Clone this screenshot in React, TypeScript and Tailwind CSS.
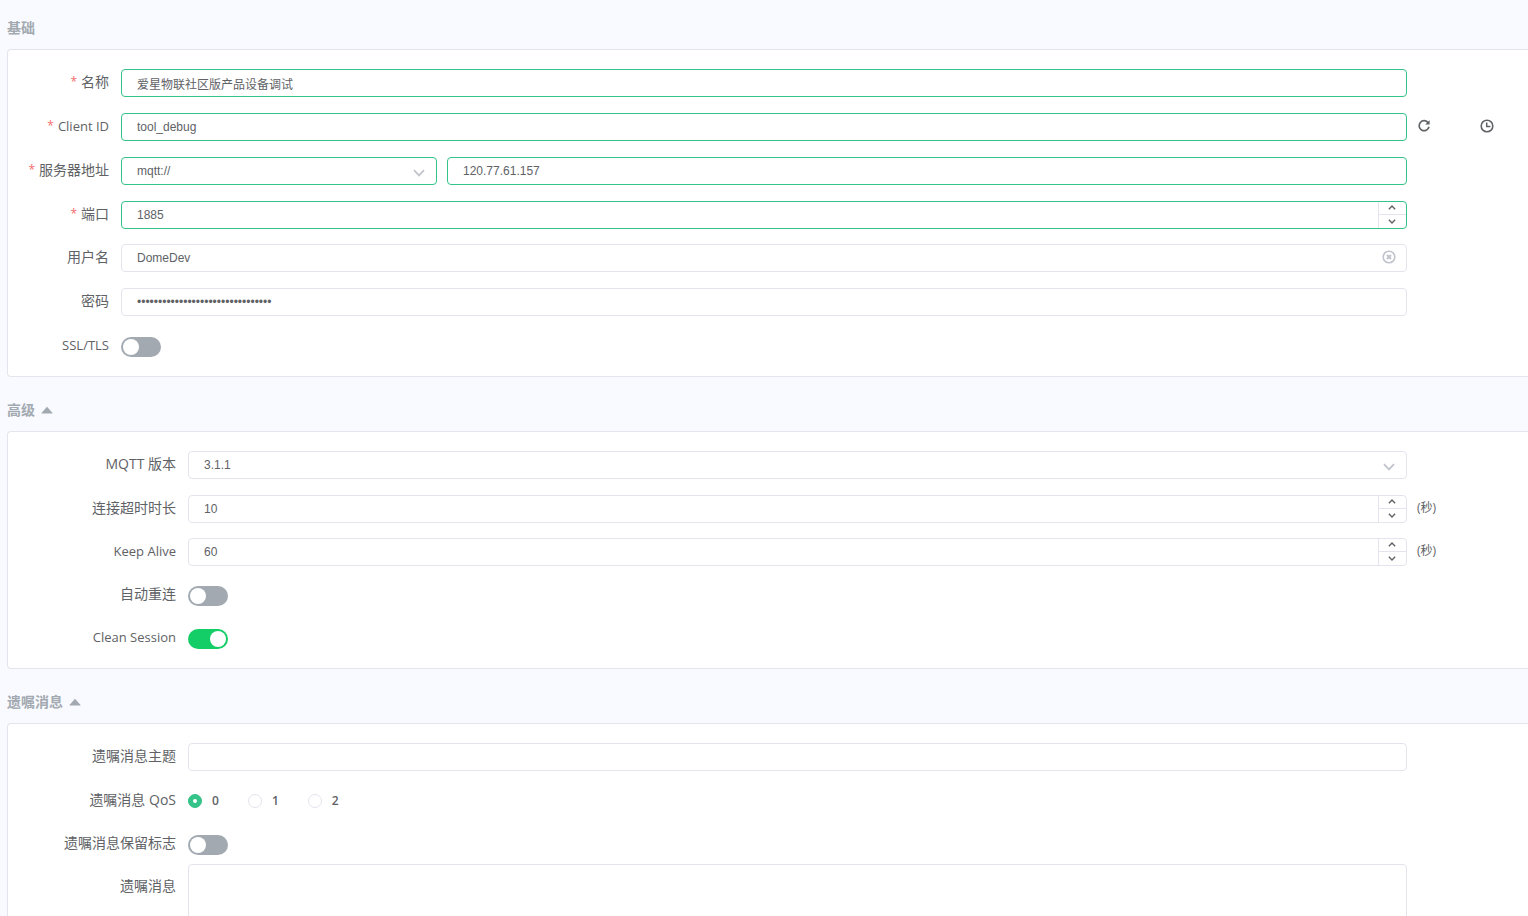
import React, { useState } from 'react';

interface RowProps {
  label: string;
  htmlFor?: string;
  required?: boolean;
  wide?: boolean;
  latin?: boolean;
  height?: string;
  suffix?: React.ReactNode;
  children: React.ReactNode;
}

const baseField =
  "block w-full rounded border bg-white text-xs text-[#606266] outline-none font-['Liberation_Sans','Noto_Sans_CJK_SC',sans-serif]";
const normalBorder = 'border-[#e4e4ef]';
const activeBorder = 'border-[#34c388]';

const Row: React.FC<RowProps> = ({ label, htmlFor, required, wide, latin, height = 'h-11', suffix, children }) => (
  <div
    className={`grid ${
      wide ? 'grid-cols-[180px_minmax(0,1fr)_121px]' : 'grid-cols-[113px_minmax(0,1fr)_121px]'
    } items-center ${height}`}
  >
    <label
      htmlFor={htmlFor}
      className={`flex justify-end pr-3 pb-0.5 leading-5 whitespace-nowrap ${latin ? 'text-[13px]' : 'text-sm'}`}
    >
      {required && <span className="mr-1 text-xs leading-5 text-[#f56c6c]">*</span>}
      {label}
    </label>
    <div>{children}</div>
    <div className="pb-0.5">{suffix}</div>
  </div>
);

const Chevron = ({ className, weight = 1.7 }: { className: string; weight?: number }) => (
  <svg viewBox="0 0 12 8" fill="none" stroke="currentColor" strokeWidth={weight} className={className}>
    <path d="M1 1.2 6 6.4 11 1.2" />
  </svg>
);

interface SelectProps {
  id: string;
  options: string[];
  active?: boolean;
}

const SelectField: React.FC<SelectProps> = ({ id, options, active }) => (
  <div className="relative">
    <select id={id} className={`${baseField} h-7 appearance-none pr-8 pl-[15px] ${active ? activeBorder : normalBorder}`}>
      {options.map((option) => (
        <option key={option}>{option}</option>
      ))}
    </select>
    <Chevron className="pointer-events-none absolute top-3 right-3 h-2 w-3 text-[#c0c4cc]" />
  </div>
);

interface NumberProps {
  id: string;
  initial: number;
  active?: boolean;
}

const NumberField: React.FC<NumberProps> = ({ id, initial, active }) => {
  const [value, setValue] = useState(initial);

  return (
    <div className={`${baseField} flex h-7 overflow-hidden ${active ? activeBorder : normalBorder}`}>
      <input
        id={id}
        type="number"
        value={value}
        onChange={(e) => setValue(Number(e.target.value))}
        className="min-w-0 flex-1 appearance-none pl-[15px] outline-none [appearance:textfield] [&::-webkit-inner-spin-button]:appearance-none"
      />
      <div className="flex w-7 flex-col border-l border-[#e4e4ef] text-[#606266]">
        <button
          type="button"
          aria-label="增加"
          onClick={() => setValue(value + 1)}
          className="flex flex-1 items-center justify-center border-b border-[#e4e4ef] pr-0.5"
        >
          <Chevron weight={2.2} className="h-[5px] w-2 rotate-180" />
        </button>
        <button
          type="button"
          aria-label="减少"
          onClick={() => setValue(value - 1)}
          className="flex flex-1 items-center justify-center pr-0.5"
        >
          <Chevron weight={2.2} className="h-[5px] w-2" />
        </button>
      </div>
    </div>
  );
};

const Switch = ({ id, on = false }: { id: string; on?: boolean }) => (
  <div className="pt-0.5">
    <input
      id={id}
      type="checkbox"
      role="switch"
      defaultChecked={on}
      className="block h-5 w-10 appearance-none rounded-full bg-[#a2a9b0] p-0.5 before:block before:size-4 before:rounded-full before:bg-white before:content-[''] checked:bg-[#13ce66] checked:before:ml-5"
    />
  </div>
);

const Heading = ({ title, open, onToggle }: { title: string; open?: boolean; onToggle?: () => void }) => (
  <h3 className="flex h-[42px] items-center text-sm leading-5 font-bold text-[#a2a9b0]">
    {onToggle ? (
      <button type="button" onClick={onToggle} className="flex items-center gap-1.5">
        {title}
        <svg viewBox="0 0 12 8" fill="currentColor" className={`h-2 w-3 ${open ? '' : 'rotate-180'}`}>
          <path d="M6 .8 11.5 7Q11.8 7.6 11 7.6H1Q.2 7.6.5 7Z" />
        </svg>
      </button>
    ) : (
      title
    )}
  </h3>
);

const Card = ({ children }: { children: React.ReactNode }) => (
  <div className="rounded-l border border-r-0 border-[#e4e4ef] bg-white pt-[11px] pb-2">{children}</div>
);

const App: React.FC = () => {
  const [showAdvanced, setShowAdvanced] = useState(true);
  const [showWill, setShowWill] = useState(true);
  const [username, setUsername] = useState('DomeDev');
  const [qos, setQos] = useState(0);

  return (
    <form className="flex min-h-screen flex-col gap-3 bg-[#f9faff] pt-[7px] pl-[7px] font-['Open_Sans','Noto_Sans_CJK_SC',sans-serif] text-[#606266]">
      {/* Basic settings */}
      <section>
        <Heading title="基础" />
        <Card>
          <Row label="名称" htmlFor="name" required>
            <input id="name" defaultValue="爱星物联社区版产品设备调试" className={`${baseField} ${activeBorder} h-7 px-[15px]`} />
          </Row>
          <Row
            label="Client ID"
            htmlFor="clientId"
            required
            latin
            suffix={
              <div className="flex items-center gap-[49px] pl-2.5">
                <button type="button" aria-label="刷新">
                  <svg viewBox="0 0 14 14" fill="none" stroke="currentColor" className="block size-3.5">
                    <path d="M11.2 3.8A5 5 0 1 0 12 7.8" strokeWidth="1.7" />
                    <path d="M12.6 1.2V5.6H8.2Z" fill="currentColor" stroke="none" />
                  </svg>
                </button>
                <button type="button" aria-label="时间">
                  <svg viewBox="0 0 14 14" fill="none" stroke="currentColor" className="block size-3.5">
                    <circle cx="7" cy="7" r="5.8" strokeWidth="1.6" />
                    <path d="M6.7 3.5V7.5H10.4" strokeWidth="1.5" />
                  </svg>
                </button>
              </div>
            }
          >
            <input id="clientId" defaultValue="tool_debug" className={`${baseField} ${activeBorder} h-7 px-[15px]`} />
          </Row>
          <Row label="服务器地址" htmlFor="protocol" required>
            <div className="grid grid-cols-[79fr_240fr] gap-2.5">
              <SelectField id="protocol" options={['mqtt://', 'mqtts://', 'ws://', 'wss://']} active />
              <input aria-label="服务器地址" defaultValue="120.77.61.157" className={`${baseField} ${activeBorder} h-7 px-[15px]`} />
            </div>
          </Row>
          <Row label="端口" htmlFor="port" required height="h-[43px]">
            <NumberField id="port" initial={1885} active />
          </Row>
          <Row label="用户名" htmlFor="username">
            <div className="relative">
              <input
                id="username"
                value={username}
                onChange={(e) => setUsername(e.target.value)}
                className={`${baseField} ${normalBorder} h-7 pr-8 pl-[15px]`}
              />
              <button
                type="button"
                aria-label="清空"
                onClick={() => setUsername('')}
                className="absolute top-1.5 right-[11px] text-[#c0c4cc]"
              >
                <svg viewBox="0 0 14 14" fill="none" stroke="currentColor" className="block size-3.5">
                  <circle cx="7" cy="7" r="5.8" strokeWidth="1.6" />
                  <path d="m5 5 4 4M9 5 5 9" strokeWidth="2" />
                </svg>
              </button>
            </div>
          </Row>
          <Row label="密码" htmlFor="password">
            <input
              id="password"
              type="password"
              defaultValue="00000000000000000000000000000000"
              className={`${baseField} ${normalBorder} h-7 px-[15px]`}
            />
          </Row>
          <Row label="SSL/TLS" htmlFor="ssl" latin>
            <Switch id="ssl" />
          </Row>
        </Card>
      </section>

      {/* Advanced settings */}
      <section>
        <Heading title="高级" open={showAdvanced} onToggle={() => setShowAdvanced(!showAdvanced)} />
        {showAdvanced && (
          <Card>
            <Row label="MQTT 版本" htmlFor="version" wide>
              <SelectField id="version" options={['3.1.1', '5.0']} />
            </Row>
            <Row
              label="连接超时时长"
              htmlFor="timeout"
              wide
              height="h-[43px]"
              suffix={<span className="block pl-2.5 text-xs">(秒)</span>}
            >
              <NumberField id="timeout" initial={10} />
            </Row>
            <Row
              label="Keep Alive"
              htmlFor="keepAlive"
              wide
              latin
              height="h-[43px]"
              suffix={<span className="block pl-2.5 text-xs">(秒)</span>}
            >
              <NumberField id="keepAlive" initial={60} />
            </Row>
            <Row label="自动重连" htmlFor="reconnect" wide height="h-[43px]">
              <Switch id="reconnect" />
            </Row>
            <Row label="Clean Session" htmlFor="clean" wide latin>
              <Switch id="clean" on />
            </Row>
          </Card>
        )}
      </section>

      {/* Last will */}
      <section>
        <Heading title="遗嘱消息" open={showWill} onToggle={() => setShowWill(!showWill)} />
        {showWill && (
          <Card>
            <Row label="遗嘱消息主题" htmlFor="willTopic" wide>
              <input id="willTopic" className={`${baseField} ${normalBorder} h-7 px-[15px]`} />
            </Row>
            <Row label="遗嘱消息 QoS" htmlFor="qos0" wide>
              <div className="flex items-center gap-[29px]">
                {[0, 1, 2].map((level) => (
                  <label key={level} className="flex items-center gap-2.5 text-xs font-semibold">
                    <input
                      id={`qos${level}`}
                      type="radio"
                      name="qos"
                      checked={qos === level}
                      onChange={() => setQos(level)}
                      className="flex size-3.5 appearance-none items-center justify-center rounded-full border border-[#e4e4ef] bg-white before:size-1 before:rounded-full before:bg-white before:content-[''] checked:border-[#34c388] checked:bg-[#34c388]"
                    />
                    {level}
                  </label>
                ))}
              </div>
            </Row>
            <Row label="遗嘱消息保留标志" htmlFor="retain" wide height="h-[41px]">
              <Switch id="retain" />
            </Row>
            <div className="grid grid-cols-[180px_minmax(0,1fr)_121px]">
              <label htmlFor="willPayload" className="flex h-11 items-center justify-end pr-3 text-sm">
                遗嘱消息
              </label>
              <textarea id="willPayload" rows={8} className={`${baseField} ${normalBorder} resize-none px-[15px] py-1`} />
            </div>
          </Card>
        )}
      </section>
    </form>
  );
};

export default App;
